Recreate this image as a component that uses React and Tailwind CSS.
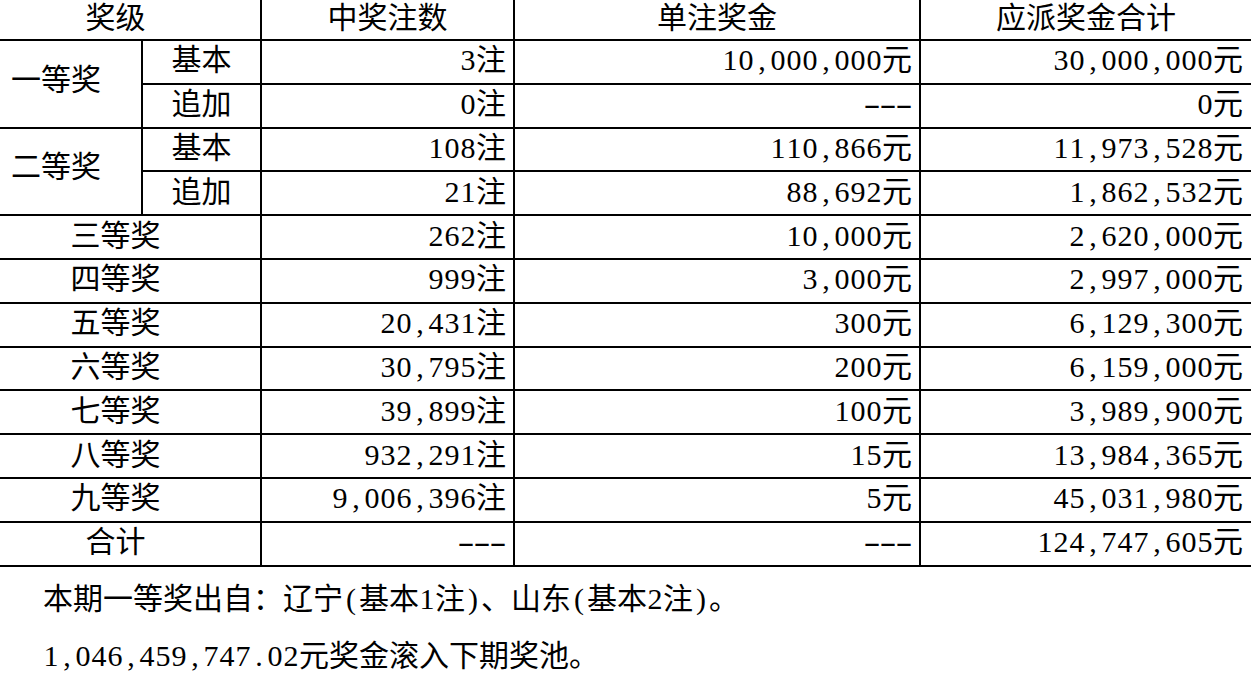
import React from 'react';

const font = { fontFamily: '"Liberation Serif", "Noto Sans CJK SC", serif' };

// 宋体的半角字符等宽，每个半角字符占一个固定宽度的格子
const Txt = ({ s }) => (
  <>
    {s.split('').map((ch, i) =>
      ch === '-' ? (
        <span key={i} className="inline-block w-[16px] text-center scale-x-[1.7]">-</span>
      ) : /[0-9,.()]/.test(ch) ? (
        <span key={i} className="inline-block w-[16px] text-center">{ch}</span>
      ) : (
        <React.Fragment key={i}>{ch}</React.Fragment>
      )
    )}
  </>
);

const rows = [
  ['三等奖', '262注', '10,000元', '2,620,000元'],
  ['四等奖', '999注', '3,000元', '2,997,000元'],
  ['五等奖', '20,431注', '300元', '6,129,300元'],
  ['六等奖', '30,795注', '200元', '6,159,000元'],
  ['七等奖', '39,899注', '100元', '3,989,900元'],
  ['八等奖', '932,291注', '15元', '13,984,365元'],
  ['九等奖', '9,006,396注', '5元', '45,031,980元'],
  ['合计', '---', '---', '124,747,605元'],
];

const cell = 'border-black border-b-2 border-r-2 flex items-center pb-[3px]';
const num = `${cell} justify-end pr-[7px]`;
const last = 'border-black border-b-2 flex items-center justify-end pr-[8px] pb-[3px]';

const Sub = ({ label, n, p, t }) => (
  <>
    <div className={`${cell} justify-center`}>{label}</div>
    <div className={num}><Txt s={n} /></div>
    <div className={num}><Txt s={p} /></div>
    <div className={last}><Txt s={t} /></div>
  </>
);

export default function App() {
  return (
    <div className="w-[1251px] h-[697px] bg-white text-black overflow-hidden text-[30px] leading-none" style={font}>
      <div className="ml-[-29px] w-[1280px] grid grid-cols-[172px_119px_253px_406px_1fr] grid-rows-[41px_repeat(12,43.8px)]">
        <div className={`${cell} col-span-2 justify-center`}>奖级</div>
        <div className={`${cell} justify-center`}>中奖注数</div>
        <div className={`${cell} justify-center`}>单注奖金</div>
        <div className="border-black border-b-2 flex items-center justify-center pb-[3px]">应派奖金合计</div>

        <div className={`${cell} row-span-2 justify-center pb-[8px]`}>一等奖</div>
        <Sub label="基本" n="3注" p="10,000,000元" t="30,000,000元" />
        <Sub label="追加" n="0注" p="---" t="0元" />

        <div className={`${cell} row-span-2 justify-center pb-[8px]`}>二等奖</div>
        <Sub label="基本" n="108注" p="110,866元" t="11,973,528元" />
        <Sub label="追加" n="21注" p="88,692元" t="1,862,532元" />

        {rows.map(([a, n, p, t]) => (
          <React.Fragment key={a}>
            <div className={`${cell} col-span-2 justify-center`}>{a}</div>
            <div className={num}><Txt s={n} /></div>
            <div className={num}><Txt s={p} /></div>
            <div className={last}><Txt s={t} /></div>
          </React.Fragment>
        ))}
      </div>

      <div className="pl-[43px] pt-[5px]">
        <p className="leading-[54px]"><Txt s="本期一等奖出自：辽宁(基本1注)、山东(基本2注)。" /></p>
        <p className="leading-[60px]"><Txt s="1,046,459,747.02元奖金滚入下期奖池。" /></p>
      </div>
    </div>
  );
}
